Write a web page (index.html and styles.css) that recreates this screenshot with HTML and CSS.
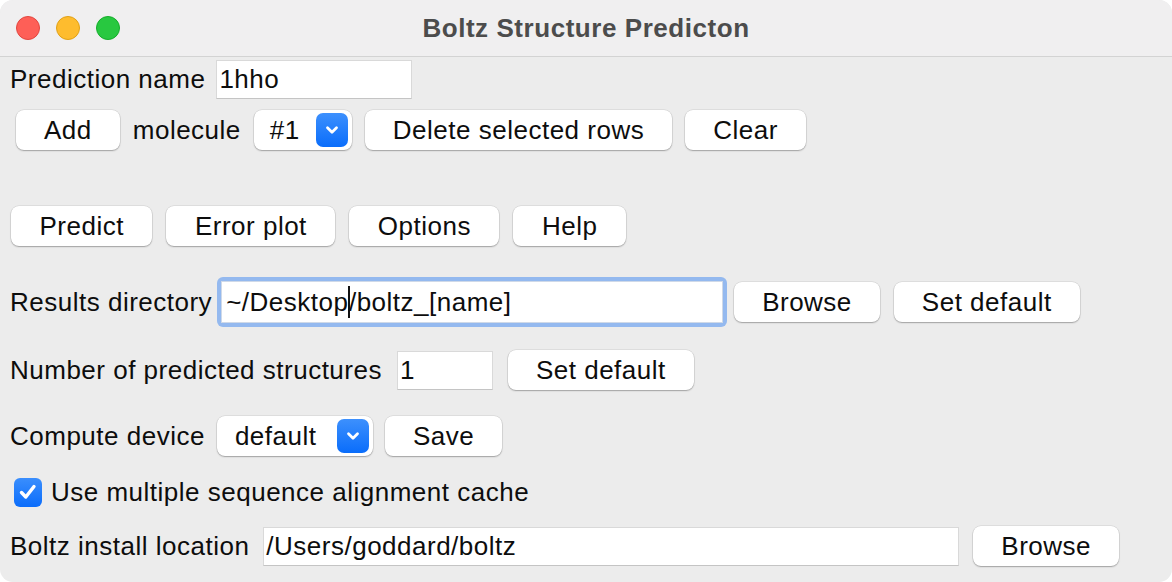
FILE: index.html
```html
<!DOCTYPE html>
<html>
<head>
<meta charset="utf-8">
<link rel="stylesheet" href="styles.css">
</head>
<body>
<div class="window">
  <div class="titlebar">
    <div class="lights">
      <span class="light red"></span>
      <span class="light yellow"></span>
      <span class="light green"></span>
    </div>
    <div class="title">Boltz Structure Predicton</div>
  </div>
  <div class="content">
    <div class="row row1">
      <span class="label">Prediction name</span>
      <div class="field name-field">1hho</div>
    </div>
    <div class="row row2">
      <button class="btn btn-add">Add</button>
      <span class="label">molecule</span>
      <div class="select select-mol">
        <span class="select-text">#1</span>
        <span class="chev"><svg width="16" height="12" viewBox="0 0 16 12"><path d="M3.5 3.8 L8 8.2 L12.5 3.8" fill="none" stroke="#fff" stroke-width="2.8" stroke-linecap="round" stroke-linejoin="round"/></svg></span>
      </div>
      <button class="btn">Delete selected rows</button>
      <button class="btn">Clear</button>
    </div>
    <div class="row row3">
      <button class="btn">Predict</button>
      <button class="btn">Error plot</button>
      <button class="btn">Options</button>
      <button class="btn">Help</button>
    </div>
    <div class="row row4">
      <span class="label">Results directory</span>
      <div class="focus-ring">
        <div class="field dir-field">~/Desktop<span class="caret"></span>/boltz_[name]</div>
      </div>
      <button class="btn btn-browse1">Browse</button>
      <button class="btn">Set default</button>
    </div>
    <div class="row row5">
      <span class="label">Number of predicted structures</span>
      <div class="field num-field">1</div>
      <button class="btn">Set default</button>
    </div>
    <div class="row row6">
      <span class="label">Compute device</span>
      <div class="select select-dev">
        <span class="select-text">default</span>
        <span class="chev"><svg width="16" height="12" viewBox="0 0 16 12"><path d="M3.5 3.8 L8 8.2 L12.5 3.8" fill="none" stroke="#fff" stroke-width="2.8" stroke-linecap="round" stroke-linejoin="round"/></svg></span>
      </div>
      <button class="btn">Save</button>
    </div>
    <div class="row row7">
      <span class="checkbox"><svg width="20" height="18" viewBox="0 0 20 18"><path d="M3.5 9.5 L7.8 14 L16 3.5" fill="none" stroke="#fff" stroke-width="3.4" stroke-linecap="round" stroke-linejoin="round"/></svg></span>
      <span class="label">Use multiple sequence alignment cache</span>
    </div>
    <div class="row row8">
      <span class="label">Boltz install location</span>
      <div class="field install-field">/Users/goddard/boltz</div>
      <button class="btn">Browse</button>
    </div>
  </div>
</div>
</body>
</html>
```
FILE: styles.css
```css
html, body {
  margin: 0;
  padding: 0;
  background: #ffffff;
}
body {
  font-family: "Liberation Sans", Arial, sans-serif;
  font-size: 26px;
  color: #111;
  letter-spacing: 0.5px;
}
.window {
  width: 1172px;
  height: 582px;
  border-radius: 13px;
  background: #ececec;
  overflow: hidden;
  display: flex;
  flex-direction: column;
}
.titlebar {
  height: 56px;
  background: #f0eff0;
  border-bottom: 1px solid #d3d3d3;
  display: flex;
  align-items: center;
  position: relative;
  flex-shrink: 0;
}
.lights {
  display: flex;
  gap: 16px;
  padding-left: 16px;
  position: absolute;
  left: 0;
  top: 16px;
}
.light {
  width: 24px;
  height: 24px;
  border-radius: 50%;
  box-sizing: border-box;
}
.red { background: #fe5f57; border: 1px solid #e2463f; }
.yellow { background: #febc2e; border: 1px solid #e1a116; }
.green { background: #28c840; border: 1px solid #14ae2a; }
.title {
  flex: 1;
  text-align: center;
  font-weight: bold;
  color: #4c4c4c;
  letter-spacing: 0.55px;
  padding-top: 1px;
}
.content {
  padding-left: 10px;
  display: flex;
  flex-direction: column;
}
.row {
  display: flex;
  align-items: center;
  gap: 14px;
  height: 40px;
}
.row1 { margin-top: 2px; height: 40px; gap: 11px; }
.row2 { margin-top: 11px; padding-left: 6px; gap: 13px; }
.row3 { margin-top: 56px; padding-left: 1px; }
.row3 .btn { padding: 0 28.5px; }
.row4 { margin-top: 31px; height: 50px; gap: 5px; }
.row5 { margin-top: 23px; gap: 15px; }
.row6 { margin-top: 26px; gap: 12px; }
.row7 { margin-top: 18px; height: 36px; gap: 9px; padding-left: 4px; }
.row8 { margin-top: 16px; }
.label {
  white-space: nowrap;
  color: #0d0d0d;
}
.btn {
  font-family: inherit;
  font-size: 26px;
  letter-spacing: 0.5px;
  color: #0d0d0d;
  background: #ffffff;
  border: none;
  border-radius: 8px;
  height: 40px;
  padding: 0 28px;
  box-shadow: 0 1px 1.5px rgba(0,0,0,0.28), 0 0 0 0.5px rgba(0,0,0,0.12);
  white-space: nowrap;
  line-height: 40px;
}
.btn-browse1 { margin-left: 2px; margin-right: 9px; }
.field {
  background: #ffffff;
  border: 1px solid #d9d9d9;
  border-bottom-color: #c4c4c4;
  box-sizing: border-box;
  height: 39px;
  line-height: 37px;
  padding-left: 2px;
  white-space: nowrap;
  color: #0d0d0d;
}
.name-field { width: 196px; }
.num-field { width: 96px; }
.install-field { width: 696px; }
.focus-ring {
  background: #94b9ef;
  border-radius: 6px;
  padding: 4px;
}
.dir-field {
  width: 502px;
  height: 42px;
  line-height: 40px;
  border-color: #cfd9e8;
  padding-left: 4px;
}
.caret {
  display: inline-block;
  width: 1.5px;
  height: 32px;
  background: #111;
  vertical-align: middle;
  margin: 0 -1px 0 0;
  position: relative;
  top: -2px;
}
.select {
  background: #fff;
  border-radius: 8px;
  height: 40px;
  box-shadow: 0 1px 1.5px rgba(0,0,0,0.28), 0 0 0 0.5px rgba(0,0,0,0.12);
  display: flex;
  align-items: center;
  justify-content: space-between;
  box-sizing: border-box;
  padding-right: 4px;
}
.select-mol { width: 98px; padding-left: 16px; }
.select-dev { width: 156px; padding-left: 18px; }
.select-text { white-space: nowrap; color: #0d0d0d; }
.chev {
  width: 32px;
  height: 34px;
  border-radius: 7px;
  background: linear-gradient(#3d90fd, #0a6dfb);
  display: flex;
  align-items: center;
  justify-content: center;
}
.checkbox {
  width: 28px;
  height: 29px;
  border-radius: 6px;
  background: linear-gradient(#3a8efd, #0b6dfb);
  display: flex;
  align-items: center;
  justify-content: center;
  flex-shrink: 0;
}
```
